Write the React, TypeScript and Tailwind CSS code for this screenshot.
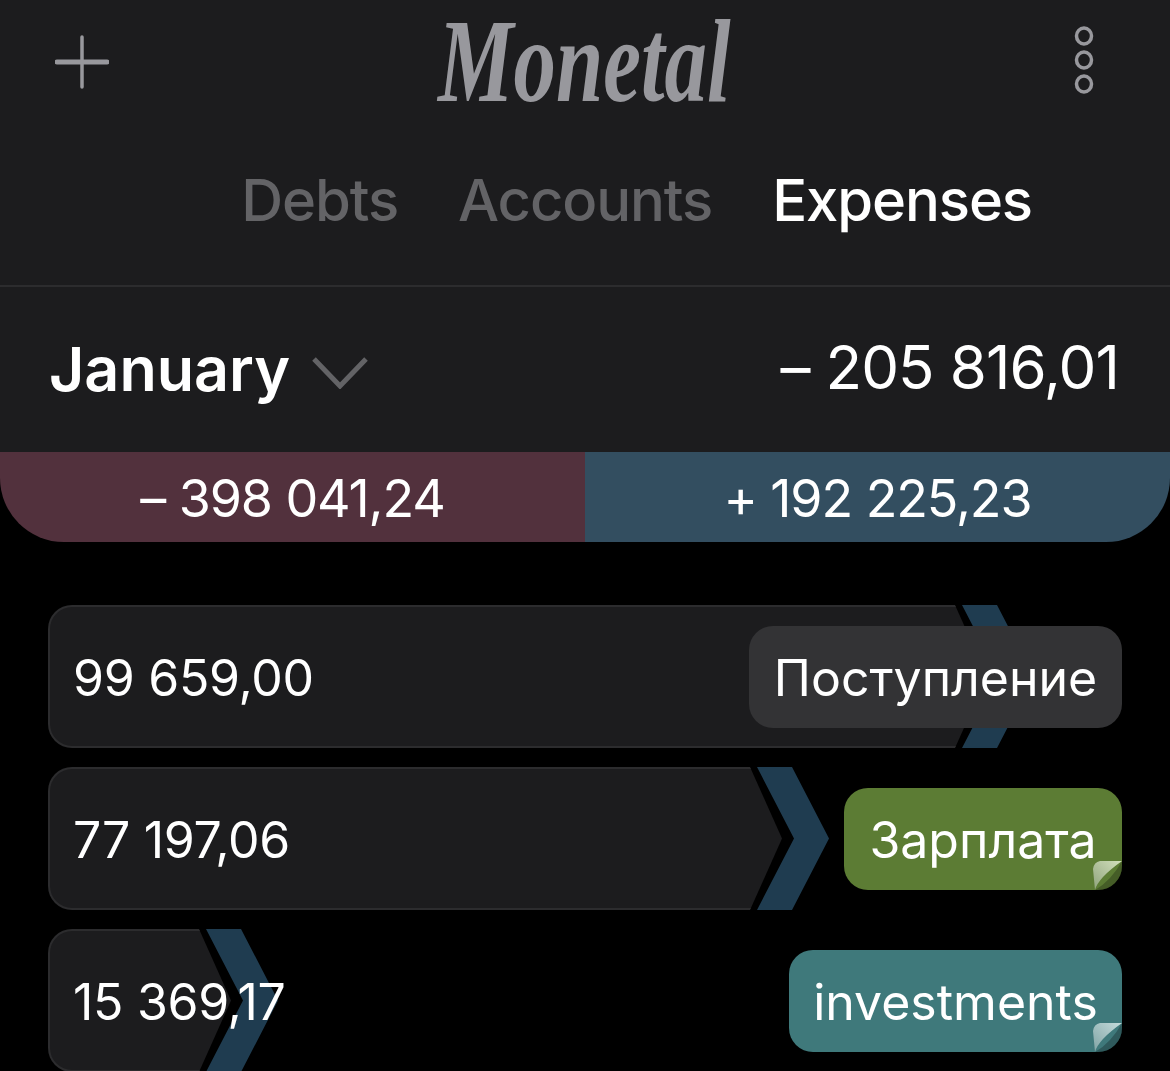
import React from 'react';

interface Expense {
  amount: string;
  width: number;
  tag: string;
  tagClass: string;
  curl?: [string, string];
}

const expenses: Expense[] = [
  { amount: '99 659,00', width: 939, tag: 'Поступление', tagClass: 'bg-[#333335] w-[373px]' },
  { amount: '77 197,06', width: 734, tag: 'Зарплата', tagClass: 'bg-[#5c7c34] w-[278px]', curl: ['#d3e0bd', '#8fa37c'] },
  { amount: '15 369,17', width: 183, tag: 'investments', tagClass: 'bg-[#3f797b] w-[333px]', curl: ['#c6dcdc', '#7fa3a4'] },
];

function PageCurl({ colors, id }: { colors: [string, string]; id: string }) {
  return (
    <svg viewBox="0 0 29 29" className="absolute right-0 bottom-0 h-[29px] w-[29px]">
      <defs>
        <linearGradient id={id} x1="1" y1="0" x2="0" y2="1">
          <stop offset="0" stopColor={colors[0]} />
          <stop offset="1" stopColor={colors[1]} />
        </linearGradient>
      </defs>
      <path d="M29 0 L29 29 L2 29 Q18 20 29 0 Z" fill="#00000040" />
      <path d="M29 0 L7 0 Q1 1 0 8 L2 29 Q5 17 29 0 Z" fill={`url(#${id})`} />
    </svg>
  );
}

function ExpenseRow({ expense }: { expense: Expense }) {
  return (
    <div className="grid h-[143px] w-[1074px] shrink-0">
      <div className="col-start-1 row-start-1 flex">
        <div
          className="h-full rounded-l-[24px] border-2 border-r-0 border-[#2c2c2e] bg-[#1c1c1e] [clip-path:polygon(0_0,calc(100%-32px)_0,100%_50%,calc(100%-32px)_100%,0_100%)]"
          style={{ width: expense.width }}
        />
        <svg viewBox="0 0 72 143" className="-ml-[25px] h-full w-[72px] shrink-0">
          <polygon points="0,0 35,0 72,71.5 35,143 0,143 37,71.5" fill="#1f3c50" />
        </svg>
      </div>
      <div className="relative col-start-1 row-start-1 flex items-center justify-between pl-[25px]">
        <span className="pt-[3px] text-[50px] tracking-[-0.3px] whitespace-nowrap text-white">{expense.amount}</span>
        <div className={`relative flex h-[102px] items-center justify-center overflow-hidden rounded-[24px] pt-[3px] text-[50px] text-white ${expense.tagClass}`}>
          {expense.tag}
          {expense.curl && <PageCurl colors={expense.curl} id={`curl-${expense.width}`} />}
        </div>
      </div>
    </div>
  );
}

export default function App() {
  return (
    <div className="h-[1071px] w-[1170px] overflow-hidden bg-black font-['Inter',sans-serif]">
      <div className="h-[452px] bg-[#1c1c1e]">
        <div className="flex h-[124px] items-center justify-between pl-[55px] pr-[73px]">
          <svg viewBox="0 0 54 54" className="h-[54px] w-[54px] text-[#98989d]">
            <path d="M2 27 H52" stroke="currentColor" strokeWidth="5" strokeLinecap="round" />
            <path d="M27 2 V52" stroke="currentColor" strokeWidth="3.5" strokeLinecap="round" />
          </svg>
          <span className="-translate-x-[6px] scale-x-[0.72] font-['Liberation_Serif',serif] text-[118px] leading-none font-bold text-[#98989d] italic">
            Monetal
          </span>
          <svg viewBox="0 0 26 72" className="h-[72px] w-[26px] text-[#98989d]">
            <g fill="none" stroke="currentColor" strokeWidth="3.5">
              <ellipse cx="13" cy="10" rx="7.5" ry="8" />
              <ellipse cx="13" cy="34" rx="7.5" ry="8" />
              <ellipse cx="13" cy="58" rx="7.5" ry="8" />
            </g>
          </svg>
        </div>
        <div className="flex h-[163px] items-start justify-end gap-[60px] border-b-2 border-[#2c2c2e] pt-[42px] pr-[138px] text-[58px] leading-[68px] font-medium tracking-[-1.1px]">
          <span className="text-[#636366]">Debts</span>
          <span className="text-[#636366]">Accounts</span>
          <span className="text-white">Expenses</span>
        </div>
        <div className="flex h-[165px] items-center justify-between px-[49px]">
          <div className="flex items-center gap-[22px]">
            <span className="text-[61px] leading-none font-semibold text-white">January</span>
            <svg viewBox="0 0 56 32" className="mt-[6px] h-[32px] w-[56px]">
              <path d="M2 2 L28 29 L54 2" fill="none" stroke="#636366" strokeWidth="5" />
            </svg>
          </div>
          <span className="mr-[2px] mb-[5px] text-[60px] leading-none tracking-[-0.9px] text-white">– 205 816,01</span>
        </div>
      </div>

      <div className="flex h-[90px] overflow-hidden rounded-b-[64px] text-[52px] tracking-[-1.1px] text-white">
        <div className="flex w-[585px] items-center justify-center bg-[#52313d] pt-[3px]">– 398 041,24</div>
        <div className="flex flex-1 items-center justify-center bg-[#334e60] pt-[3px]">+ 192 225,23</div>
      </div>

      <div className="flex flex-col gap-[19px] pt-[63px] pl-[48px]">
        {expenses.map((e) => (
          <ExpenseRow key={e.amount} expense={e} />
        ))}
      </div>
    </div>
  );
}
